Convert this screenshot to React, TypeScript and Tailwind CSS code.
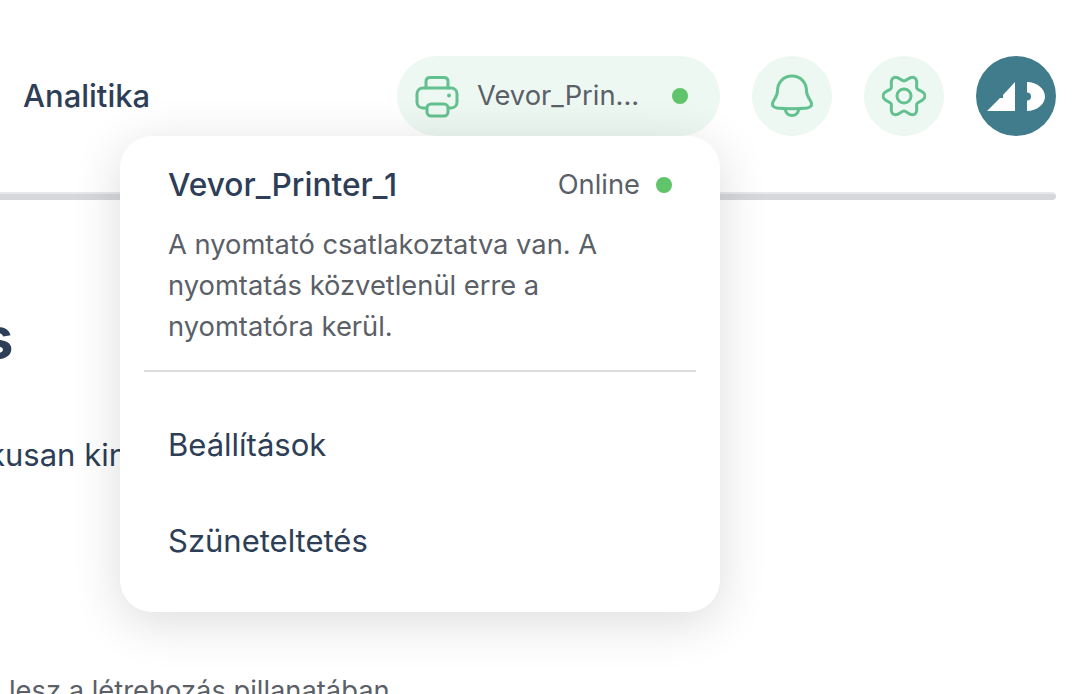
const FONT = "font-['Inter','Noto_Sans',sans-serif]";

function PrinterIcon() {
  return (
    <svg width="44" height="44" viewBox="0 0 44 44" fill="none" stroke="#63c08f" strokeWidth="3" strokeLinecap="round" strokeLinejoin="round">
      <path d="M11 14V7.500C11 5 12.700 3.500 15 3.500H29C31.300 3.500 33 5 33 7.500V14" />
      <path d="M11 34H8C4.500 34 2 31.500 2 28V20C2 16.500 4.500 14 8 14H36C39.500 14 42 16.500 42 20V28C42 31.500 39.500 34 36 34H33" />
      <rect x="12" y="30" width="21" height="12" rx="4" fill="#eef8f3" />
      <circle cx="34" cy="21.500" r="2" fill="#63c08f" stroke="none" />
    </svg>
  );
}

function BellIcon() {
  return (
    <svg width="44" height="44" viewBox="0 0 44 44" fill="none" stroke="#63c08f" strokeWidth="3" strokeLinecap="round" strokeLinejoin="round">
      <path d="M22 2C13 2 7.500 9 7.500 17C7.500 23 3 26 2.500 29.500C2.200 32 4 33.500 7 34C16 35 28 35 37 34C40 33.500 41.800 32 41.500 29.500C41 26 36.500 23 36.500 17C36.500 9 31 2 22 2Z" />
      <path d="M15 35C16 39.500 19 41.500 22 41.500C25 41.500 28 39.500 29 35" />
    </svg>
  );
}

function GearIcon() {
  return (
    <svg width="44" height="44" viewBox="0 0 44 44" fill="none" stroke="#63c08f" strokeWidth="3" strokeLinecap="round" strokeLinejoin="round">
      <path d="M22 7C25 7 28.200 1.300 32.500 3.800C36.800 6.300 33.500 11.900 35 14.500C36.500 17.100 43 17 43 22C43 27 36.500 26.900 35 29.500C33.500 32.100 36.800 37.700 32.500 40.200C28.200 42.700 25 37 22 37C19 37 15.800 42.700 11.500 40.200C7.200 37.700 10.500 32.100 9 29.500C7.500 26.900 1 27 1 22C1 17 7.500 17.100 9 14.500C10.500 11.900 7.200 6.300 11.500 3.800C15.800 1.300 19 7 22 7Z" />
      <circle cx="22" cy="22" r="7" />
    </svg>
  );
}

function LogoMark() {
  return (
    <svg width="60" height="32" viewBox="0 0 60 32" fill="#fff">
      <path d="M1 31L14 18L17 18L17 15L29 2V31Z" />
      <path d="M41 2C51 2 59 9 59 16.500C59 24 51 31 41 31V20.500A4 4 0 0 0 41 12.500Z" />
    </svg>
  );
}

function RoundButton({ children }: { children: React.ReactNode }) {
  return <div className="flex h-20 w-20 items-center justify-center rounded-full bg-[#eef8f3]">{children}</div>;
}

export default function App() {
  return (
    <div className={`relative h-[694px] w-[1090px] overflow-hidden bg-white ${FONT}`}>
      <header className="flex h-[136px] items-end pl-[23px] pr-[34px]">
        <div className="flex h-20 w-full items-center">
          <span className="text-[31px] font-medium text-[#2d3e56]">Analitika</span>
          <div className="ml-auto flex items-center gap-8">
            <div className="flex h-20 w-[323px] items-center rounded-full bg-[#eef8f3] pl-[18px] pr-8">
              <PrinterIcon />
              <span className="ml-[18px] text-[27.300px] text-[#5b5f68]">Vevor_Prin...</span>
              <span className="ml-auto h-4 w-4 rounded-full bg-[#60c46a]" />
            </div>
            <RoundButton><BellIcon /></RoundButton>
            <RoundButton><GearIcon /></RoundButton>
            <div className="flex h-20 w-20 items-center justify-center rounded-full bg-[#407c8c]">
              <LogoMark />
            </div>
          </div>
        </div>
      </header>

      <div className="-ml-4 mr-[34px] mt-14 h-2 rounded-full border-t-2 border-[#e6e8ea] bg-[#d5d7da]" />

      <main className="whitespace-nowrap">
        <h1 className="ml-[-18px] mt-[104px] text-[56px] font-bold leading-[68px] text-[#2d3e56]">s</h1>
        <p className="ml-[-12px] mt-[63px] text-[31px] leading-10 text-[#2d3e56]">kusan kint</p>
        <p className="ml-[9px] mt-[196px] text-[27.300px] leading-10 text-[#5b5f68]">lesz a létrehozás pillanatában</p>
      </main>

      <div className="absolute left-[120px] top-[136px] w-[600px] rounded-[32px] bg-white px-6 pb-[23px] pt-[25px] shadow-[0_10px_50px_rgba(0,0,0,0.14)]">
        <div className="px-6">
          <div className="flex items-center justify-between">
            <span className="text-[31.700px] font-medium leading-[48px] text-[#2d3e56]">Vevor_Printer_1</span>
            <div className="flex items-center gap-4">
              <span className="text-[27.300px] text-[#5b5f68]">Online</span>
              <span className="h-4 w-4 rounded-full bg-[#60c46a]" />
            </div>
          </div>
          <p className="mt-[15px] w-[440px] text-[27.300px] leading-[41px] text-[#5b5f68]">
            A nyomtató csatlakoztatva van. A nyomtatás közvetlenül erre a nyomtatóra kerül.
          </p>
        </div>
        <div className="mt-[23px] h-0.5 bg-[#dcdcde]" />
        <div className="mt-[25px] px-6">
          <div className="flex h-24 items-center text-[31px] text-[#2d3e56]">Beállítások</div>
          <div className="flex h-24 items-center text-[31px] text-[#2d3e56]">Szüneteltetés</div>
        </div>
      </div>
    </div>
  );
}
